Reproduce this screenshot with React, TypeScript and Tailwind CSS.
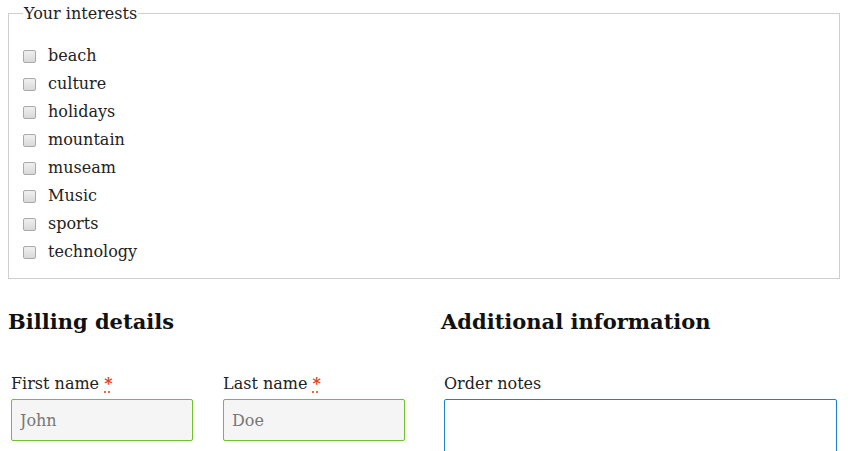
import React from 'react';

const interests = ['beach', 'culture', 'holidays', 'mountain', 'museam', 'Music', 'sports', 'technology'];

const Check = ({ label }: { label: string }) => (
    <label className="flex items-center h-[28px] leading-[28px]">
        <span className="w-[13px] h-[13px] rounded-[2px] border border-solid border-[#a9a9a9] bg-gradient-to-b from-[#f0f0f0] to-[#d9d9d9] shrink-0" />
        <span className="ml-[12px] text-[#222]">{label}</span>
    </label>
);

const Required = () => (
    <abbr title="required" className="text-[#e2401c] underline decoration-dotted decoration-[#e2401c] underline-offset-[3px] font-bold">
        *
    </abbr>
);

export default function App() {
    return (
        <div className="w-[855px] h-[451px] overflow-hidden bg-white text-[16px] text-[#222]" style={{ fontFamily: '"DejaVu Serif", serif' }}>
            <fieldset className="mx-[8px] mt-[1px] w-[832px] border border-solid border-[#cfcfcf] pl-[14px] pr-[12px] pb-[12px]">
                <legend className="px-[1px] leading-[24px] pt-[1px] text-[#222]">Your interests</legend>
                <div className="pt-[16px] flex flex-col">
                    {interests.map((i) => (
                        <Check key={i} label={i} />
                    ))}
                </div>
            </fieldset>

            <div className="flex mx-[8px] mt-[27px]">
                <div className="w-[433px] shrink-0">
                    <h3 className="font-bold text-[21px] leading-[32px] text-[#111]">Billing details</h3>
                    <div className="flex gap-[24px] mt-[34px]">
                        <div className="w-[188px] px-[3px]">
                            <label className="block leading-[24px]">
                                First name <Required />
                            </label>
                            <input
                                placeholder="John"
                                className="mt-[3px] block w-full h-[42px] px-[8px] bg-[#f5f5f5] border border-solid border-[#6dc22e] rounded-[2px] placeholder:text-[#777] outline-none"
                            />
                        </div>
                        <div className="w-[188px] px-[3px]">
                            <label className="block leading-[24px]">
                                Last name <Required />
                            </label>
                            <input
                                placeholder="Doe"
                                className="mt-[3px] block w-full h-[42px] px-[8px] bg-[#f5f5f5] border border-solid border-[#6dc22e] rounded-[2px] placeholder:text-[#777] outline-none"
                            />
                        </div>
                    </div>
                </div>
                <div className="w-[399px] shrink-0">
                    <h3 className="font-bold text-[21px] leading-[32px] text-[#111]">Additional information</h3>
                    <div className="mt-[34px] px-[3px]">
                        <label className="block leading-[24px]">Order notes</label>
                        <textarea className="mt-[3px] block w-full h-[80px] border border-solid border-[#1e7fd1] rounded-[2px] outline-none resize-none" />
                    </div>
                </div>
            </div>
        </div>
    );
}
